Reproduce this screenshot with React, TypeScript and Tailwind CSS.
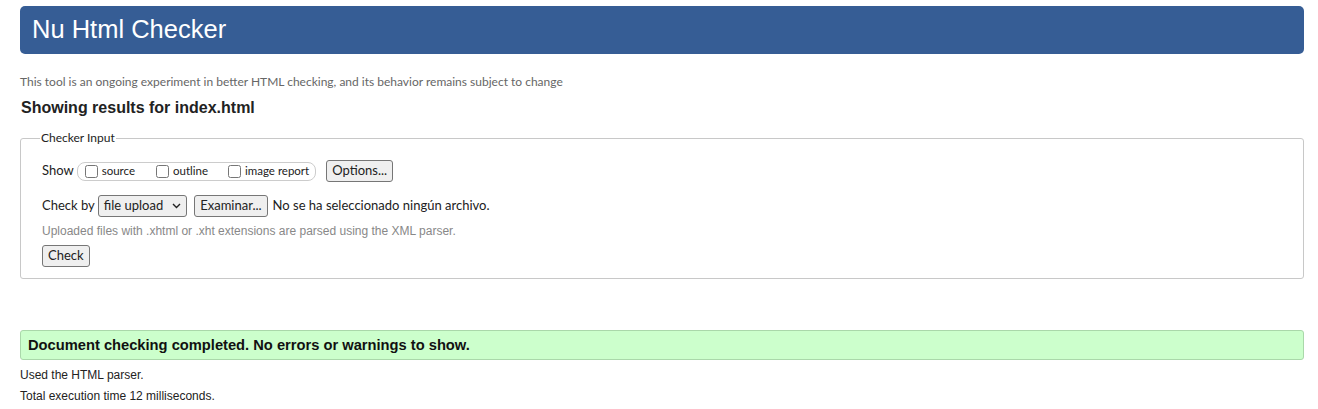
export default function App() {
  const ui = { fontFamily: 'Lato, "Noto Sans", sans-serif' };
  const arial = { fontFamily: '"Liberation Sans", Arial, sans-serif' };

  return (
    <div className="min-h-[409px] bg-white pl-5 pr-[14px] pt-[6px] text-[#222]" style={arial}>
      <header className="h-12 rounded-[5px] bg-[#365d95] px-3 flex items-center">
        <h1 className="text-[25.5px] text-white leading-none">Nu Html Checker</h1>
      </header>

      <p className="mt-[20px] text-[12px] text-[#666] leading-[15px]" style={ui}>
        This tool is an ongoing experiment in better HTML checking, and its behavior remains subject to change
      </p>

      <h2 className="mt-[10px] text-[16px] font-bold leading-[18px] pl-px">Showing results for index.html</h2>

      <fieldset className="mt-[12px] border border-[#c8c8c8] rounded-[3px] pl-[21px] pr-3 pb-[11px] pt-[13px]">
        <legend className="-ml-[2px] text-[12px] text-[#222] px-px" style={ui}>
          Checker Input
        </legend>

        <div className="flex items-center h-[22px] text-[13px]" style={ui}>
          <span>Show</span>
          <div className="ml-[3px] flex items-center h-[19px] border border-[#ccc] rounded-[8px] pl-[7px] pr-[6px] text-[11.5px]">
            <label className="flex items-center">
              <input type="checkbox" className="w-[13px] h-[13px] m-0" />
              <span className="ml-[4px]">source</span>
            </label>
            <label className="flex items-center ml-[21px]">
              <input type="checkbox" className="w-[13px] h-[13px] m-0" />
              <span className="ml-[4px]">outline</span>
            </label>
            <label className="flex items-center ml-[20px]">
              <input type="checkbox" className="w-[13px] h-[13px] m-0" />
              <span className="ml-[4px]">image report</span>
            </label>
          </div>
          <button className="ml-[10px] h-[22px] px-[5px] border border-[#767676] rounded-[3px] bg-[#efefef] text-[13px]">
            Options...
          </button>
        </div>

        <div className="mt-[13px] flex items-center h-[22px] text-[13px]" style={ui}>
          <span>Check by</span>
          <div className="ml-[3px] h-[22px] px-[5px] border border-[#767676] rounded-[3px] bg-[#efefef] flex items-center gap-[9px] text-[13px]">
            <span>file upload</span>
            <svg width="9" height="6" viewBox="0 0 9 6" fill="none">
              <path d="M1 1l3.5 3.5L8 1" stroke="#222" strokeWidth="1.4" />
            </svg>
          </div>
          <button className="ml-[7px] h-[22px] px-[5px] border border-[#767676] rounded-[3px] bg-[#efefef] text-[13px]">
            Examinar...
          </button>
          <span className="ml-[5px]">No se ha seleccionado ningún archivo.</span>
        </div>

        <p className="mt-[6px] text-[12px] text-[#888] leading-[16px]">
          Uploaded files with .xhtml or .xht extensions are parsed using the XML parser.
        </p>

        <button className="mt-[6px] h-[22px] px-[5px] border border-[#767676] rounded-[3px] bg-[#efefef] text-[13px]" style={ui}>
          Check
        </button>
      </fieldset>

      <div className="mt-[51px] h-[30px] border border-[#aad8aa] rounded-[3px] bg-[#ccffcc] flex items-center px-[7px]">
        <p className="text-[14.7px] font-bold text-[#111]">Document checking completed. No errors or warnings to show.</p>
      </div>

      <p className="mt-[7px] text-[12px] leading-[16px]">Used the HTML parser.</p>
      <p className="mt-[5px] text-[12px] leading-[16px]">Total execution time 12 milliseconds.</p>
    </div>
  );
}
